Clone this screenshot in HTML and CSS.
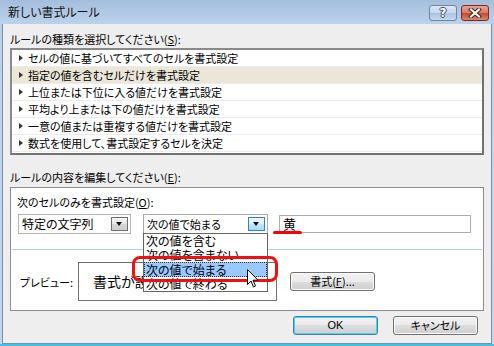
FILE: index.html
```html
<!DOCTYPE html>
<html>
<head>
  <title>新しい書式ルール</title>
  <meta charset="utf-8">
  <link rel="stylesheet" href="styles.css">
</head>
<body>
  <div class="window">
    <div class="titlebar">
      <span class="title">新しい書式ルール</span>
      <div class="caption-btns">
        <div class="cap help">?</div>
        <div class="cap close">
          <svg width="14" height="10" viewBox="0 0 14 10">
            <path d="M3 1.5 L11 8.5 M11 1.5 L3 8.5" stroke="#4a2a24" stroke-width="4" stroke-linecap="square"/>
            <path d="M3 1.5 L11 8.5 M11 1.5 L3 8.5" stroke="#fff" stroke-width="2" stroke-linecap="square"/>
          </svg>
        </div>
      </div>
    </div>

    <div class="client">
      <div class="label">ルールの種類を選択してください(<u>S</u>):</div>
      <ul class="rule-list">
        <li>セルの値に基づいてすべてのセルを書式設定</li>
        <li class="selected">指定の値を含むセルだけを書式設定</li>
        <li>上位または下位に入る値だけを書式設定</li>
        <li>平均より上または下の値だけを書式設定</li>
        <li>一意の値または重複する値だけを書式設定</li>
        <li>数式を使用して、書式設定するセルを決定</li>
      </ul>

      <div class="label label-edit">ルールの内容を編集してください(<u>E</u>):</div>
      <div class="edit-panel">
        <div class="edit-top">
          <div class="sublabel">次のセルのみを書式設定(<u>O</u>):</div>
          <div class="cond-row">
            <div class="combo combo-type">
              <span>特定の文字列</span>
              <span class="dd"></span>
            </div>
            <div class="combo combo-op">
              <span>次の値で始まる</span>
              <span class="dd hot"></span>
              <ul class="dropdown">
                <li>次の値を含む</li>
                <li>次の値を含まない</li>
                <li class="current">次の値で始まる</li>
                <li>次の値で終わる</li>
                <div class="mark"></div>
                <svg class="cursor" width="12" height="19" viewBox="0 0 12 19">
                  <path d="M0.5 0.5 L0.5 15.5 L4 12 L6.5 18 L8.5 17 L6 11.2 L11 11.2 Z" fill="#fff" stroke="#000" stroke-width="1" stroke-linejoin="round"/>
                </svg>
              </ul>
            </div>
            <div class="textbox">
              <span>黄</span>
              <span class="squiggle"></span>
            </div>
          </div>
        </div>
        <div class="edit-bottom">
          <span class="preview-label">プレビュー:</span>
          <div class="preview">書式が設定されていません</div>
          <div class="btn fmt-btn">書式(<u>F</u>)...</div>
        </div>
      </div>

      <div class="footer">
        <div class="btn default">OK</div>
        <div class="btn">キャンセル</div>
      </div>
    </div>
  </div>
</body>
</html>
```

FILE: styles.css
```css
body {
  margin: 0;
  font-family: "Noto Sans CJK JP", sans-serif;
  font-size: 11px;
  font-feature-settings: "palt";
  color: #000;
}

u {
  text-decoration: underline;
  text-underline-offset: 1px;
}

.window {
  width: 494px;
  height: 346px;
  box-sizing: border-box;
  display: flex;
  flex-direction: column;
  padding: 0 2px 0 2px;
  background: linear-gradient(#a3bedc, #bcd2eb 24px, #c2d7ee);
  border-bottom: 2px solid #3cc3ea;
}

.titlebar {
  height: 24px;
  display: flex;
  justify-content: space-between;
  align-items: center;
  padding-left: 6px;
}

.title {
  font-size: 12px;
  line-height: 16px;
  color: #111;
}

.caption-btns {
  align-self: flex-start;
  margin-top: 5px;
  margin-right: 3px;
  display: flex;
  gap: 4px;
}

.cap {
  width: 28px;
  height: 16px;
  box-sizing: border-box;
  border-radius: 3px;
  display: flex;
  align-items: center;
  justify-content: center;
}

.cap.help {
  border: 1px solid #6e86a4;
  background: linear-gradient(#dbe7f5, #c2d6ec 50%, #a9c3e0 50%, #c5d9ef);
  color: #fff;
  font-family: "DejaVu Sans", sans-serif;
  font-weight: bold;
  font-size: 12px;
  text-shadow: 1px 0 #3f4f66, -1px 0 #3f4f66, 0 1px #3f4f66, 0 -1px #3f4f66;
}

.cap.close {
  border: 1px solid #7d2b1e;
  background: linear-gradient(#e8a493, #d47a64 50%, #c2452c 50%, #d98a6e);
}

.client {
  flex: 1;
  background: #eeeeee;
  border: 1px solid #7c8ea4;
  border-top: none;
  padding: 6px 7px 0 7px;
}

.label {
  height: 18px;
  line-height: 18px;
}

.rule-list {
  list-style: none;
  margin: 0;
  padding: 0;
  height: 107px;
  box-sizing: border-box;
  border: 2px solid #727272;
  border-top-color: #8a8a8a;
  border-left-color: #8a8a8a;
  background: #fff;
  overflow: hidden;
}

.rule-list li {
  height: 17px;
  box-sizing: border-box;
  line-height: 16px;
  border-bottom: 1px solid #ececec;
  padding-left: 16px;
  position: relative;
}

.rule-list li::before {
  content: "";
  position: absolute;
  left: 7px;
  top: 5px;
  border-left: 4px solid #333;
  border-top: 3.5px solid transparent;
  border-bottom: 3.5px solid transparent;
}

.rule-list li.selected {
  background: #ebe6d7;
}

.label-edit {
  margin-top: 13px;
  height: 19px;
  line-height: 19px;
}

.edit-panel {
  height: 124px;
  box-sizing: border-box;
  border: 1px solid #8c8d90;
  background: #fff;
  display: flex;
  flex-direction: column;
}

.edit-top {
  height: 62px;
  box-sizing: border-box;
  border-bottom: 1px solid #a8cbea;
  margin: 0 1px;
}

.sublabel {
  margin-top: 6px;
  padding-left: 5px;
  height: 17px;
  line-height: 17px;
}

.cond-row {
  margin-top: 3px;
  padding-left: 6px;
  display: flex;
  align-items: center;
}

.combo {
  position: relative;
  height: 20px;
  box-sizing: border-box;
  border: 1px solid #b4b4b4;
  background: #fff;
  display: flex;
  align-items: center;
  justify-content: space-between;
  padding-left: 3px;
  padding-right: 2px;
  line-height: 16px;
}

.combo-type {
  width: 113px;
  font-size: 12px;
}

.combo-op {
  width: 125px;
  margin-left: 12px;
  border-color: #a9a9a9;
}

.dd {
  width: 17px;
  height: 14px;
  box-sizing: border-box;
  border: 1px solid #707070;
  background: linear-gradient(#f5f5f5, #e6e6e6 50%, #d6d6d6 50%, #cfcfcf);
  position: relative;
}

.dd::after {
  content: "";
  position: absolute;
  left: 4px;
  top: 4px;
  border-top: 4px solid #111;
  border-left: 3.5px solid transparent;
  border-right: 3.5px solid transparent;
}

.dd.hot {
  border-color: #3c7fb1;
  background: linear-gradient(#eaf6fd, #d9f0fc 50%, #bee6fd 50%, #a7d9f5);
}

.dropdown {
  list-style: none;
  margin: 0;
  padding: 0;
  position: absolute;
  left: -1px;
  top: 18px;
  width: 125px;
  box-sizing: border-box;
  border: 1px solid #646464;
  background: #fff;
  z-index: 2;
}

.dropdown li {
  height: 14px;
  line-height: 14px;
  padding-left: 2px;
  overflow: hidden;
  font-size: 12px;
}

.dropdown li.current {
  height: 15px;
  line-height: 15px;
  background: #99c9ff;
  outline: 1px dotted #333;
  outline-offset: -1px;
}

.dropdown .mark {
  position: absolute;
  left: -12px;
  top: 22px;
  width: 146px;
  height: 26px;
  box-sizing: border-box;
  border: 3px solid #f01010;
  border-radius: 8px;
}

.dropdown .cursor {
  position: absolute;
  left: 103px;
  top: 35px;
}

.textbox {
  position: relative;
  width: 192px;
  height: 18px;
  box-sizing: border-box;
  margin-left: 11px;
  border: 1px solid #abadb3;
  padding-left: 3px;
  line-height: 16px;
  font-size: 13px;
}

.squiggle {
  position: absolute;
  left: -7px;
  top: 15px;
  width: 29px;
  height: 3px;
  border-radius: 2px;
  background: #f00;
}

.edit-bottom {
  flex: 1;
  display: flex;
  align-items: center;
  padding-left: 9px;
  padding-top: 3px;
}

.preview-label {
  width: 58px;
}

.preview {
  width: 199px;
  height: 39px;
  box-sizing: border-box;
  border: 1px solid #6f6f6f;
  padding-left: 14px;
  font-size: 14px;
  line-height: 37px;
  white-space: nowrap;
  overflow: hidden;
}

.btn {
  width: 85px;
  height: 19px;
  box-sizing: border-box;
  border: 1px solid #707070;
  border-radius: 3px;
  background: linear-gradient(#f2f2f2, #ebebeb 50%, #dddddd 50%, #cfcfcf);
  box-shadow: inset 0 0 0 1px #fcfcfc;
  text-align: center;
  line-height: 17px;
}

.fmt-btn {
  margin-left: 13px;
}

.footer {
  margin-top: 5px;
  padding-right: 6px;
  display: flex;
  justify-content: flex-end;
  gap: 15px;
}

.btn.default {
  border-color: #3c7fb1;
  box-shadow: inset 0 0 0 1px #48d3fb;
  font-family: "Liberation Sans", sans-serif;
}
```
